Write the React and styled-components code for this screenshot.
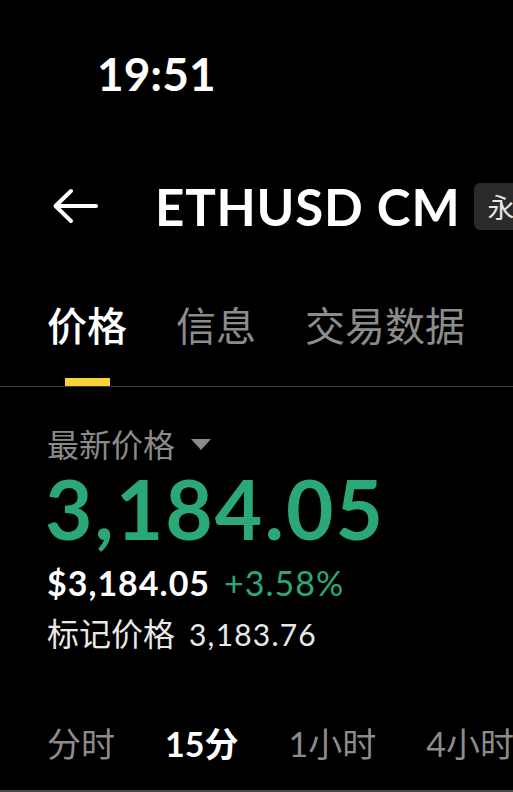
import React from 'react';
import styled, { createGlobalStyle } from 'styled-components';

const GlobalStyle = createGlobalStyle`
  html, body {
    margin: 0;
    background: #000;
    overflow: hidden;
  }
  body {
    font-family: Lato, "Noto Sans CJK SC", sans-serif;
    color: #fff;
  }
`;

const CJK = `"Noto Sans CJK SC", sans-serif`;
const LATIN = `Lato, "Noto Sans CJK SC", sans-serif`;

const Screen = styled.div`
  width: 513px;
  height: 792px;
  overflow: hidden;
  display: flex;
  flex-direction: column;
  border-bottom: 2px solid #4a4a4a;
  box-sizing: border-box;
`;

const StatusBar = styled.div`
  height: 150px;
  box-sizing: border-box;
  padding: 49px 0 0 97px;
`;

const Clock = styled.span`
  font-family: ${LATIN};
  font-size: 46px;
  font-weight: 700;
  line-height: 50px;
`;

const Header = styled.div`
  display: flex;
  align-items: center;
  height: 112px;
  padding-left: 52px;
  white-space: nowrap;
`;

const BackButton = styled.button`
  background: none;
  border: 0;
  padding: 0;
  width: 46px;
  height: 36px;
  margin-right: 57px;
  color: #fff;
  display: flex;
`;

const Title = styled.h1`
  margin: 0;
  font-family: ${LATIN};
  font-size: 51px;
  font-weight: 700;
  letter-spacing: 0.8px;
  line-height: 1;
`;

const Tag = styled.span`
  margin-left: 14px;
  height: 47px;
  padding: 0 10px 0 13px;
  border-radius: 6px;
  background: #2a2a2a;
  display: flex;
  align-items: center;
  font-family: ${CJK};
  font-size: 27px;
  color: #e6e6e6;
`;

const TabBar = styled.div`
  display: flex;
  gap: 49px;
  padding: 38px 0 0 47px;
  border-bottom: 1px solid #3c3c3c;
`;

const Tab = styled.div`
  display: flex;
  flex-direction: column;
  align-items: center;
  font-family: ${CJK};
  font-size: 40px;
  font-weight: ${(p) => (p.$active ? 500 : 400)};
  line-height: 48px;
  color: ${(p) => (p.$active ? '#fff' : '#8c8c8c')};
`;

const Indicator = styled.span`
  width: 45px;
  height: 8px;
  margin-top: 30px;
  background: ${(p) => (p.$active ? '#f8d33a' : 'transparent')};
`;

const PriceBlock = styled.div`
  padding: 36px 0 0 47px;
  display: flex;
  flex-direction: column;
`;

const LabelRow = styled.div`
  display: flex;
  align-items: center;
  gap: 16px;
  font-family: ${CJK};
  font-size: 32px;
  line-height: 40px;
  color: #8a8a8a;
`;

const Caret = styled.span`
  width: 0;
  height: 0;
  border-left: 10px solid transparent;
  border-right: 10px solid transparent;
  border-top: 11px solid #8a8a8a;
  margin-top: 2px;
`;

const BigPrice = styled.div`
  font-family: ${LATIN};
  font-size: 82px;
  font-weight: 700;
  line-height: 82px;
  letter-spacing: 2px;
  color: #2ba878;
  margin: 4px 0 0 -2px;
`;

const SubRow = styled.div`
  display: flex;
  align-items: baseline;
  gap: 14px;
  margin-top: 12px;
  font-family: ${LATIN};
  font-size: 34px;
  line-height: 44px;
  letter-spacing: 1px;
`;

const UsdPrice = styled.span`
  font-weight: 700;
  color: #fff;
`;

const Change = styled.span`
  font-weight: 400;
  color: ${(p) => (p.$up ? '#2ba878' : '#e0294a')};
`;

const MarkRow = styled.div`
  display: flex;
  align-items: baseline;
  gap: 14px;
  margin-top: 4px;
  line-height: 46px;
`;

const MarkLabel = styled.span`
  font-family: ${CJK};
  font-size: 32px;
  color: #e8e8e8;
`;

const MarkValue = styled.span`
  font-family: ${LATIN};
  font-size: 30px;
  color: #e8e8e8;
  letter-spacing: 1.2px;
`;

const IntervalBar = styled.div`
  display: flex;
  gap: 50px;
  padding: 67px 0 0 47px;
  white-space: nowrap;
`;

const Interval = styled.span`
  font-family: ${LATIN};
  font-size: 34px;
  line-height: 40px;
  font-weight: ${(p) => (p.$active ? 700 : 400)};
  color: ${(p) => (p.$active ? '#fff' : '#8c8c8c')};
`;

const ArrowLeft = () => (
  <svg width="46" height="36" viewBox="0 0 46 36" fill="none">
    <path
      d="M44 18H4M19 3L3.5 18L19 33"
      stroke="currentColor"
      strokeWidth="4"
      strokeLinecap="round"
      strokeLinejoin="round"
    />
  </svg>
);

const tabs = ['价格', '信息', '交易数据'];
const intervals = ['分时', '15分', '1小时', '4小时'];

export default function App() {
  const activeTab = 0;
  const activeInterval = 1;

  return (
    <Screen>
      <GlobalStyle />
      <StatusBar>
        <Clock>19:51</Clock>
      </StatusBar>
      <Header>
        <BackButton aria-label="back">
          <ArrowLeft />
        </BackButton>
        <Title>ETHUSD CM</Title>
        <Tag>永续</Tag>
      </Header>
      <TabBar>
        {tabs.map((t, i) => (
          <Tab key={t} $active={i === activeTab}>
            {t}
            <Indicator $active={i === activeTab} />
          </Tab>
        ))}
      </TabBar>
      <PriceBlock>
        <LabelRow>
          最新价格
          <Caret />
        </LabelRow>
        <BigPrice>3,184.05</BigPrice>
        <SubRow>
          <UsdPrice>$3,184.05</UsdPrice>
          <Change $up>+3.58%</Change>
        </SubRow>
        <MarkRow>
          <MarkLabel>标记价格</MarkLabel>
          <MarkValue>3,183.76</MarkValue>
        </MarkRow>
      </PriceBlock>
      <IntervalBar>
        {intervals.map((v, i) => (
          <Interval key={v} $active={i === activeInterval}>
            {v}
          </Interval>
        ))}
      </IntervalBar>
    </Screen>
  );
}
